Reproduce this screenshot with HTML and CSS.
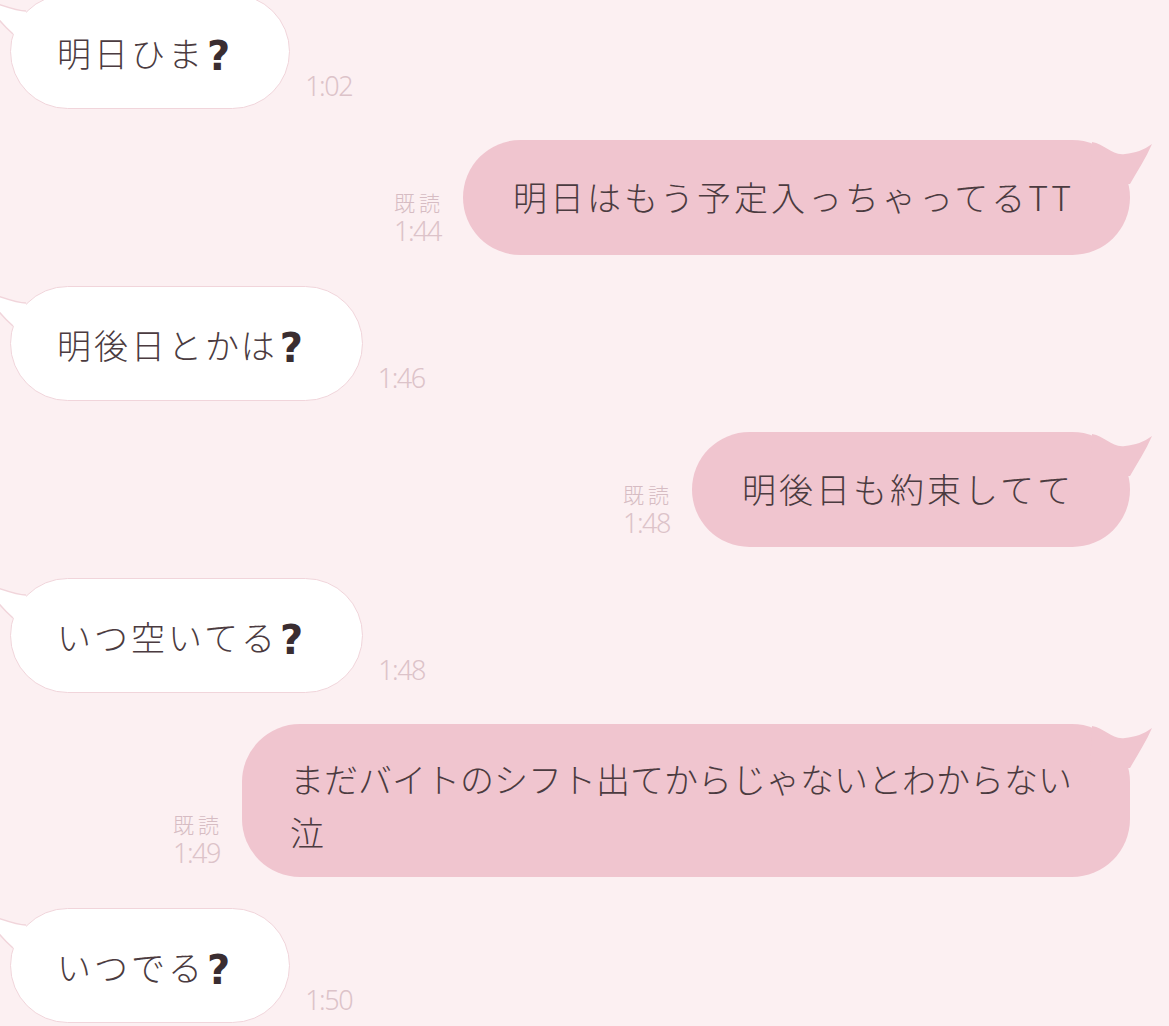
FILE: index.html
```html
<!DOCTYPE html>
<html lang="ja">
<head>
  <meta charset="UTF-8">
  <meta name="viewport" content="width=device-width, initial-scale=1.0">
  <title>トーク</title>
  <link rel="stylesheet" href="styles.css">
</head>
<body>
  <div class="chat">
    <div class="row in">
      <div class="bubble">
        <svg class="tail" viewBox="0 0 44 46"><path class="fill" d="M40,17 C30,17 18,12 0,6 C8,22 18,32 27,40 L44,44 Z"/><path class="line" d="M40,17 C30,17 18,12 0,6 C8,22 18,32 27,40"/></svg>
        明日ひま<span class="q">?</span>
      </div>
      <span class="time">1:02</span>
    </div>

    <div class="row out">
      <div class="meta"><span class="read">既読</span><span class="time">1:44</span></div>
      <div class="bubble">
        明日はもう予定入っちゃってるTT
        <svg class="tail" viewBox="0 0 62 46"><path d="M2,2 C15,4 22,16 35,14 C45,13 54,10 62,4 C56,18 48,30 40,44 L0,44 Z"/></svg>
      </div>
    </div>

    <div class="row in">
      <div class="bubble">
        <svg class="tail" viewBox="0 0 44 46"><path class="fill" d="M40,17 C30,17 18,12 0,6 C8,22 18,32 27,40 L44,44 Z"/><path class="line" d="M40,17 C30,17 18,12 0,6 C8,22 18,32 27,40"/></svg>
        明後日とかは<span class="q">?</span>
      </div>
      <span class="time">1:46</span>
    </div>

    <div class="row out">
      <div class="meta"><span class="read">既読</span><span class="time">1:48</span></div>
      <div class="bubble">
        明後日も約束してて
        <svg class="tail" viewBox="0 0 62 46"><path d="M2,2 C15,4 22,16 35,14 C45,13 54,10 62,4 C56,18 48,30 40,44 L0,44 Z"/></svg>
      </div>
    </div>

    <div class="row in">
      <div class="bubble">
        <svg class="tail" viewBox="0 0 44 46"><path class="fill" d="M40,17 C30,17 18,12 0,6 C8,22 18,32 27,40 L44,44 Z"/><path class="line" d="M40,17 C30,17 18,12 0,6 C8,22 18,32 27,40"/></svg>
        いつ空いてる<span class="q">?</span>
      </div>
      <span class="time">1:48</span>
    </div>

    <div class="row out">
      <div class="meta"><span class="read">既読</span><span class="time">1:49</span></div>
      <div class="bubble multi">
        まだバイトのシフト出てからじゃないとわからない<br>泣
        <svg class="tail" viewBox="0 0 62 46"><path d="M2,2 C15,4 22,16 35,14 C45,13 54,10 62,4 C56,18 48,30 40,44 L0,44 Z"/></svg>
      </div>
    </div>

    <div class="row in">
      <div class="bubble">
        <svg class="tail" viewBox="0 0 44 46"><path class="fill" d="M40,17 C30,17 18,12 0,6 C8,22 18,32 27,40 L44,44 Z"/><path class="line" d="M40,17 C30,17 18,12 0,6 C8,22 18,32 27,40"/></svg>
        いつでる<span class="q">?</span>
      </div>
      <span class="time">1:50</span>
    </div>
  </div>
</body>
</html>
```

FILE: styles.css
```css
body {
  margin: 0;
  background-color: #fcf0f2;
  font-family: "Noto Sans CJK JP", sans-serif;
  overflow: hidden;
}

.chat {
  display: flex;
  flex-direction: column;
  gap: 31px;
  margin-top: -6px;
  padding: 0 39px 0 10px;
}

.row {
  display: flex;
  align-items: flex-end;
}

.row.out {
  justify-content: flex-end;
}

.bubble {
  position: relative;
  box-sizing: border-box;
  height: 115px;
  padding: 31px 56px 0 46px;
  border-radius: 58px;
  font-size: 34px;
  font-weight: 300;
  line-height: 53px;
  letter-spacing: 3px;
  color: #4b3b40;
  white-space: nowrap;
}

.in .bubble {
  background-color: #fff;
  border: 1.5px solid #f1d5db;
}

.out .bubble {
  background-color: #f0c5cf;
  padding: 30px 56px 0 50px;
}

.out .bubble.multi {
  height: 153px;
  padding: 28px 58px 0 48px;
  letter-spacing: 0;
}

.q {
  display: inline-block;
  margin-left: 2px;
  font-family: "DejaVu Sans", sans-serif;
  font-weight: bold;
  font-size: 40px;
  line-height: 1;
  vertical-align: -3px;
  color: #3a2d31;
}

.tail {
  position: absolute;
  top: 0;
  overflow: visible;
}

.in .tail {
  left: -25px;
  top: -1.5px;
  width: 44px;
  height: 46px;
}

.in .tail .fill {
  fill: #fff;
}

.in .tail .line {
  fill: none;
  stroke: #f1d5db;
  stroke-width: 1.5;
}

.out .tail {
  right: -22px;
  width: 62px;
  height: 46px;
}

.out .tail path {
  fill: #f0c5cf;
}

.time {
  font-family: "Noto Sans", sans-serif;
  font-weight: 300;
  font-size: 27px;
  letter-spacing: -1.5px;
  color: #dcc3c9;
  line-height: 26px;
}

.in .time {
  margin: 0 0 10px 15px;
}

.meta {
  display: flex;
  flex-direction: column;
  align-items: flex-start;
  gap: 5px;
  margin: 0 19px 11px 0;
}

.read {
  font-size: 21px;
  font-weight: 300;
  letter-spacing: 4px;
  line-height: 22px;
  color: #d6bcc3;
}
```
